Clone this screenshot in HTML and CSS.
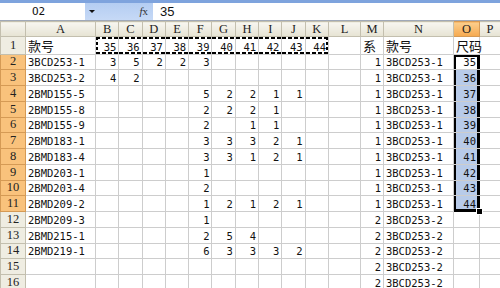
FILE: index.html
```html
<!DOCTYPE html>
<html lang="zh">
<head>
    <meta charset="UTF-8">
    <title>Sheet1</title>
    <link rel="stylesheet" href="styles.css">
</head>
<body>
    <div class="fbar">
        <div class="namebox">O2</div>
        <div class="drop"><span class="arrow"></span></div>
        <div class="fx"><i>f</i>x</div>
        <div class="formula">35</div>
    </div>

    <table class="sheet">
        <colgroup>
            <col class="c-rh"><col class="c-a">
            <col class="c-n"><col class="c-n"><col class="c-n"><col class="c-n"><col class="c-n">
            <col class="c-n"><col class="c-n"><col class="c-n"><col class="c-n"><col class="c-n">
            <col class="c-l"><col class="c-m"><col class="c-nn"><col class="c-o"><col class="c-p">
        </colgroup>
        <tr class="hd">
            <th class="corner"></th><th>A</th><th>B</th><th>C</th><th>D</th><th>E</th><th>F</th><th>G</th><th>H</th><th>I</th><th>J</th><th>K</th><th>L</th><th>M</th><th>N</th><th class="on">O</th><th>P</th>
        </tr>
        <tr class="r1">
            <th>1</th><td class="t"><span class="zh">款号</span></td>
            <td class="ants al">35</td><td class="ants">36</td><td class="ants">37</td><td class="ants">38</td><td class="ants">39</td><td class="ants">40</td><td class="ants">41</td><td class="ants">42</td><td class="ants">43</td><td class="ants ar">44</td>
            <td></td><td class="t"><span class="zh">系</span></td><td class="t nl"><span class="zh">款号</span></td><td class="t spill"><span class="zh">尺码</span></td><td></td>
        </tr>
        <tr>
            <th class="on">2</th><td class="t">3BCD253-1</td>
            <td>3</td><td>5</td><td>2</td><td>2</td><td>3</td><td></td><td></td><td></td><td></td><td></td>
            <td></td><td>1</td><td class="t nl">3BCD253-1</td><td class="sel top">35</td><td></td>
        </tr>
        <tr>
            <th class="on">3</th><td class="t">3BCD253-2</td>
            <td>4</td><td>2</td><td></td><td></td><td></td><td></td><td></td><td></td><td></td><td></td>
            <td></td><td>1</td><td class="t nl">3BCD253-1</td><td class="sel fill">36</td><td></td>
        </tr>
        <tr class="cut">
            <th class="on">4</th><td class="t">2BMD155-5</td>
            <td></td><td></td><td></td><td></td><td>5</td><td>2</td><td>2</td><td>1</td><td>1</td><td></td>
            <td></td><td>1</td><td class="t nl">3BCD253-1</td><td class="sel fill">37</td><td></td>
        </tr>
        <tr>
            <th class="on">5</th><td class="t">2BMD155-8</td>
            <td></td><td></td><td></td><td></td><td>2</td><td>2</td><td>2</td><td>1</td><td></td><td></td>
            <td></td><td>1</td><td class="t nl">3BCD253-1</td><td class="sel fill">38</td><td></td>
        </tr>
        <tr>
            <th class="on">6</th><td class="t">2BMD155-9</td>
            <td></td><td></td><td></td><td></td><td>2</td><td></td><td>1</td><td>1</td><td></td><td></td>
            <td></td><td>1</td><td class="t nl">3BCD253-1</td><td class="sel fill">39</td><td></td>
        </tr>
        <tr>
            <th class="on">7</th><td class="t">2BMD183-1</td>
            <td></td><td></td><td></td><td></td><td>3</td><td>3</td><td>3</td><td>2</td><td>1</td><td></td>
            <td></td><td>1</td><td class="t nl">3BCD253-1</td><td class="sel fill">40</td><td></td>
        </tr>
        <tr>
            <th class="on">8</th><td class="t">2BMD183-4</td>
            <td></td><td></td><td></td><td></td><td>3</td><td>3</td><td>1</td><td>2</td><td>1</td><td></td>
            <td></td><td>1</td><td class="t nl">3BCD253-1</td><td class="sel fill">41</td><td></td>
        </tr>
        <tr>
            <th class="on">9</th><td class="t">2BMD203-1</td>
            <td></td><td></td><td></td><td></td><td>1</td><td></td><td></td><td></td><td></td><td></td>
            <td></td><td>1</td><td class="t nl">3BCD253-1</td><td class="sel fill">42</td><td></td>
        </tr>
        <tr>
            <th class="on">10</th><td class="t">2BMD203-4</td>
            <td></td><td></td><td></td><td></td><td>2</td><td></td><td></td><td></td><td></td><td></td>
            <td></td><td>1</td><td class="t nl">3BCD253-1</td><td class="sel fill">43</td><td></td>
        </tr>
        <tr>
            <th class="on">11</th><td class="t">2BMD209-2</td>
            <td></td><td></td><td></td><td></td><td>1</td><td>2</td><td>1</td><td>2</td><td>1</td><td></td>
            <td></td><td>1</td><td class="t nl">3BCD253-1</td><td class="sel fill bot">44</td><td></td>
        </tr>
        <tr>
            <th>12</th><td class="t">2BMD209-3</td>
            <td></td><td></td><td></td><td></td><td>1</td><td></td><td></td><td></td><td></td><td></td>
            <td></td><td>2</td><td class="t nl">3BCD253-2</td><td></td><td></td>
        </tr>
        <tr>
            <th>13</th><td class="t">2BMD215-1</td>
            <td></td><td></td><td></td><td></td><td>2</td><td>5</td><td>4</td><td></td><td></td><td></td>
            <td></td><td>2</td><td class="t nl">3BCD253-2</td><td></td><td></td>
        </tr>
        <tr>
            <th>14</th><td class="t">2BMD219-1</td>
            <td></td><td></td><td></td><td></td><td>6</td><td>3</td><td>3</td><td>3</td><td>2</td><td></td>
            <td></td><td>2</td><td class="t nl">3BCD253-2</td><td></td><td></td>
        </tr>
        <tr>
            <th>15</th><td></td>
            <td></td><td></td><td></td><td></td><td></td><td></td><td></td><td></td><td></td><td></td>
            <td></td><td>2</td><td class="t nl">3BCD253-2</td><td></td><td></td>
        </tr>
        <tr>
            <th>16</th><td></td>
            <td></td><td></td><td></td><td></td><td></td><td></td><td></td><td></td><td></td><td></td>
            <td></td><td>2</td><td class="t nl">3BCD253-2</td><td></td><td></td>
        </tr>
    </table>
</body>
</html>
```

FILE: styles.css
```css
body{
    margin:0;
    width:500px;
    height:288px;
    overflow:hidden;
    background:#fff;
    font-family:"DejaVu Sans Mono","Noto Sans CJK SC",monospace;
    font-size:10.5px;
    color:#111;
}

/* formula bar */
.fbar{
    display:flex;
    height:17px;
    padding-top:3px;
    background:linear-gradient(#7ea3dd 0,#7ea3dd 3px,#b4cdf2 3px,#c6d9f6 100%);
    border-bottom:1px solid #9fa8b8;
}
.namebox{
    width:53px;
    padding-left:32px;
    background:#fff;
    line-height:17px;
    font-size:11px;
}
.drop{
    width:14px;
    display:flex;
    align-items:center;
    justify-content:center;
}
.arrow{
    border-left:3px solid transparent;
    border-right:3px solid transparent;
    border-top:3px solid #111;
}
.fx{
    width:54px;
    text-align:right;
    padding-right:5px;
    box-sizing:border-box;
    font-family:"Liberation Serif",serif;
    font-size:11px;
    line-height:17px;
    color:#333;
}
.formula{
    flex:1;
    background:#fff;
    padding-left:7px;
    font-family:"Liberation Sans",sans-serif;
    font-size:13px;
    line-height:17px;
}

/* sheet */
.sheet{
    border-collapse:collapse;
    table-layout:fixed;
    width:500px;
}
.c-rh{width:25px}
.c-a{width:70px}
.c-n{width:23.3px}
.c-l{width:32px}
.c-m{width:23px}
.c-nn{width:70px}
.c-o{width:26px}
.c-p{width:21px}

.sheet td,.sheet th{
    border:1px solid #cdcdcd;
    padding:0 2px;
    height:14.75px;
    line-height:13px;
    vertical-align:bottom;
    text-align:right;
    white-space:nowrap;
    overflow:hidden;
    position:relative;
}
.sheet th{
    background:#efede2;
    border-color:#c3bfae;
    font-family:"Liberation Serif",serif;
    font-weight:normal;
    font-size:12.5px;
    text-align:center;
    color:#222;
    vertical-align:middle;
}
.sheet .hd th{
    height:14px;
    background:linear-gradient(#f7f6f0,#e6e3d3);
}
.sheet .hd th.on,.sheet th.on{
    background:#f9c27c;
    border-color:#d59a55;
}
.sheet .hd th.on{
    background:linear-gradient(#fbcf8e,#f6a94f);
}
.sheet .r1 td,.sheet .r1 th{
    height:16.5px;
}
.sheet td.t{
    text-align:left;
}
.zh{
    font-family:"Noto Sans CJK SC",sans-serif;
    font-size:13px;
    line-height:14px;
}
.sheet td.spill{
    overflow:visible;
}
.sheet td.nl{
    border-left:1px solid #111;
}
.sheet .cut td{
    border-top:1px solid #000;
}

/* copy marquee */
.sheet td.ants{
    background:
        repeating-linear-gradient(90deg,#000 0 4px,transparent 4px 6px) top/100% 2px no-repeat,
        repeating-linear-gradient(90deg,#000 0 4px,transparent 4px 6px) bottom/100% 2px no-repeat;
}
.sheet td.ants.al{
    background:
        repeating-linear-gradient(90deg,#000 0 4px,transparent 4px 6px) top/100% 2px no-repeat,
        repeating-linear-gradient(90deg,#000 0 4px,transparent 4px 6px) bottom/100% 2px no-repeat,
        repeating-linear-gradient(#000 0 3px,transparent 3px 5px) left/2px 100% no-repeat;
}
.sheet td.ants.ar{
    background:
        repeating-linear-gradient(90deg,#000 0 4px,transparent 4px 6px) top/100% 2px no-repeat,
        repeating-linear-gradient(90deg,#000 0 4px,transparent 4px 6px) bottom/100% 2px no-repeat,
        repeating-linear-gradient(#000 0 3px,transparent 3px 5px) right/2px 100% no-repeat;
}

/* selection O2:O11 */
.sheet td.sel{
    border-left:1px solid #000;
    border-right:1px solid #000;
    box-shadow:inset 2px 0 #000,inset -2px 0 #000;
    padding-right:3px;
}
.sheet td.fill{
    background:#b8cbe9;
}
.sheet td.top{
    border-top:1px solid #000;
    box-shadow:inset 2px 0 #000,inset -2px 0 #000,inset 0 2px #000;
}
.sheet td.bot{
    border-bottom:1px solid #000;
    box-shadow:inset 2px 0 #000,inset -2px 0 #000,inset 0 -2px #000;
    overflow:visible;
}
.sheet td.bot::after{
    content:"";
    position:absolute;
    right:-4px;
    bottom:-4px;
    width:5px;
    height:5px;
    background:#000;
    border:1px solid #fff;
}
```
